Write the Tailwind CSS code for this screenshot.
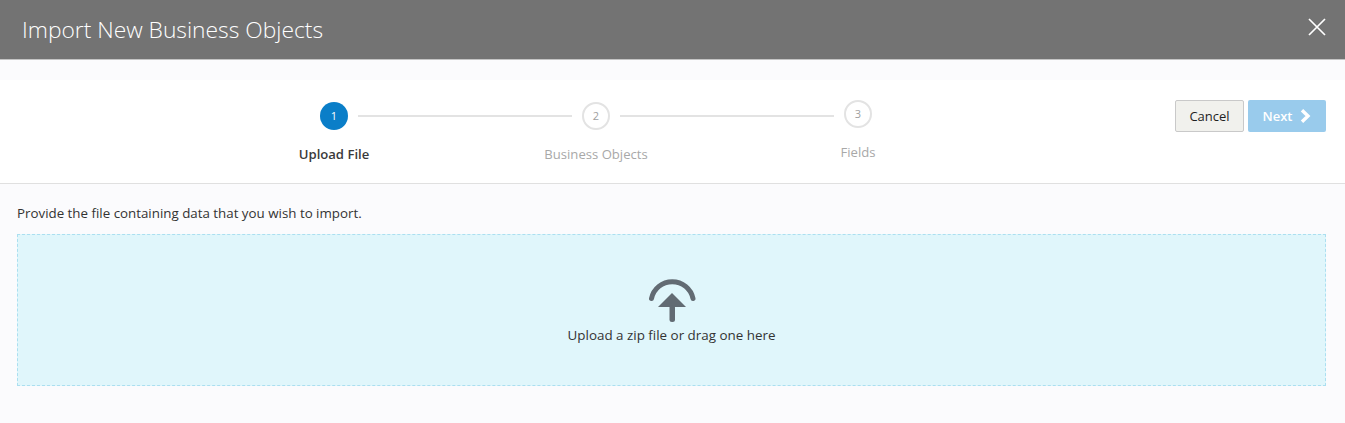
<!DOCTYPE html>
<html lang="en">
<head>
<meta charset="utf-8">
<title>Import New Business Objects</title>
<script src="https://cdn.jsdelivr.net/npm/@tailwindcss/browser@4"></script>
</head>
<body class="bg-[#fbfbfd] font-['Open_Sans','Noto_Sans',sans-serif] text-[#2f2f2f]">
<div class="h-[423px] w-[1345px] overflow-hidden flex flex-col">
  <header class="h-[60px] shrink-0 bg-[#737373] border-b border-[#c4c4c4] flex items-center justify-between pl-[22px] pr-[19px]">
    <h1 class="text-[22.8px] leading-[30px] text-white font-light">Import New Business Objects</h1>
    <button class="w-[18px] h-[18px] text-white -mt-[5px]" aria-label="Close">
      <svg viewBox="0 0 18 18" class="w-[18px] h-[18px]" fill="none" stroke="currentColor" stroke-width="1.7"><path d="M1 1l16 16M17 1L1 17"/></svg>
    </button>
  </header>
  <div class="h-5 shrink-0 bg-[#fbfbfd]"></div>
  <section class="h-[104px] shrink-0 bg-white border-b border-[#e0e0e0] flex justify-between pr-[19px]">
    <div class="flex flex-col pl-[203px]">
      <div class="flex items-start pl-[117px] h-[48px]">
        <div class="mt-[22px] w-7 h-7 rounded-full bg-[#0a7ec8] text-white text-[11px] flex items-center justify-center">1</div>
        <div class="mt-[35px] mx-[10px] w-[214px] h-[2px] bg-[#e3e3e3]"></div>
        <div class="mt-[22px] w-7 h-7 rounded-full border-2 border-[#e3e3e3] bg-white text-[#a0a0a0] text-[11px] flex items-center justify-center">2</div>
        <div class="mt-[35px] mx-[10px] w-[214px] h-[2px] bg-[#e3e3e3]"></div>
        <div class="mt-[20px] w-7 h-7 rounded-full border-2 border-[#e3e3e3] bg-white text-[#a0a0a0] text-[11px] flex items-center justify-center">3</div>
      </div>
      <div class="flex text-[13.1px] leading-[20px] text-center">
        <div class="mt-[16px] w-[262px] font-semibold text-[#3a3a3a]">Upload File</div>
        <div class="mt-[16px] w-[262px] text-[#a8a8a8]">Business Objects</div>
        <div class="mt-[14px] w-[262px] text-[#a8a8a8]">Fields</div>
      </div>
    </div>
    <div class="flex items-start gap-1 pt-5">
      <button class="w-[69px] h-8 rounded-[2px] border border-[#c9c9c9] bg-[#f1f1ed] text-[13px] text-[#1f1f1f]"><span class="relative top-px">Cancel</span></button>
      <button class="w-[78px] h-8 rounded-[2px] bg-[#99cbec] text-[13px] font-semibold text-white flex items-center justify-center gap-[8px]"><span class="relative top-px">Next</span>
        <svg viewBox="0 0 11 14" class="w-[11px] h-[14px]" fill="none" stroke="currentColor" stroke-width="3.4"><path d="M2 1.2L8 7l-6 5.8"/></svg>
      </button>
    </div>
  </section>
  <main class="flex-1 pl-[17px] pr-[19px]">
    <p class="pt-[20px] h-[50px] text-[13.33px] leading-[18px] text-[#333]">Provide the file containing data that you wish to import.</p>
    <div class="h-[152px] border border-dashed border-[#abdff0] bg-[#e0f6fb] flex flex-col items-center pt-[44px]">
      <svg viewBox="0 0 48 44" class="w-12 h-11 text-[#626b73]" fill="currentColor">
        <path d="M3.5 19.5A21.2 21.2 0 0 1 45 19.5" fill="none" stroke="currentColor" stroke-width="5" stroke-linecap="round"/>
        <path d="M24 14L38 28H10z"/>
        <rect x="21.5" y="26" width="5.5" height="17" rx="2.5"/>
      </svg>
      <p class="text-[13.4px] leading-[18px] mt-[3px] text-[#333]">Upload a zip file or drag one here</p>
    </div>
  </main>
</div>
</body>
</html>
